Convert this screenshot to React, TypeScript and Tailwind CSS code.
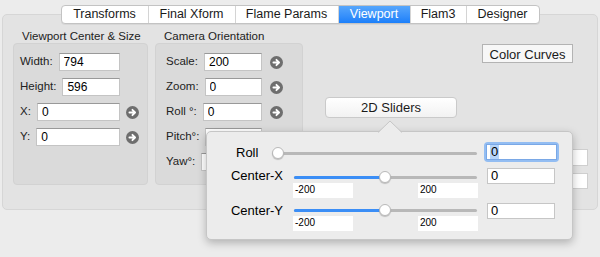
const tabs = ['Transforms', 'Final Xform', 'Flame Params', 'Viewport', 'Flam3', 'Designer']
const tabWidths = ['w-[86px]', 'w-[87px]', 'w-[103px]', 'w-[72px]', 'w-[56px]', 'w-[73px]']

function GoArrow() {
  return (
    <svg width="13" height="13" viewBox="0 0 13 13" className="shrink-0">
      <circle cx="6.5" cy="6.5" r="6.5" fill="#6e6e6e" />
      <path
        d="M3.4 6.5h5.6M6.4 3.8 9.1 6.5 6.4 9.2"
        stroke="#fff"
        strokeWidth="1.8"
        fill="none"
        strokeLinecap="round"
        strokeLinejoin="round"
      />
    </svg>
  )
}

function Field({ label, value, arrow, gap }: { label: string; value: string; arrow?: boolean; gap: string }) {
  return (
    <div className="flex h-[18px] items-center">
      <span className="shrink-0 text-[11.5px] text-[#222]">{label}</span>
      <input
        readOnly
        value={value}
        className="ml-[6px] h-[18px] min-w-0 flex-1 border border-[#c4c4c4] border-t-[#999] bg-white pl-[4px] text-[12px] text-black outline-none"
      />
      <div className={`${gap} flex w-[13px] shrink-0 justify-center`}>{arrow && <GoArrow />}</div>
    </div>
  )
}

function Group({ title, className, children }: { title: string; className: string; children: React.ReactNode }) {
  return (
    <div className={`flex shrink-0 flex-col ${className}`}>
      <div className="h-[14px] pl-[9px] text-[11.5px] leading-[14px] text-[#222]">{title}</div>
      <div className="h-[142px] rounded-[4px] border border-[#d2d2d2] bg-[#dadada]">{children}</div>
    </div>
  )
}

function Slider({ width, knob, fill }: { width: string; knob: number; fill?: boolean }) {
  return (
    <div className={`relative h-[12px] ${width}`}>
      <div className="absolute left-0 right-0 top-[5px] h-[3px] rounded-full bg-[#b8b8b8]" />
      {fill && <div className="absolute left-0 top-[5px] h-[3px] rounded-full bg-[#3b8ef6]" style={{ width: knob }} />}
      <div
        className="absolute top-0 h-[12px] w-[12px] rounded-full border border-[#b9b9b9] bg-white shadow-[0_1px_1px_rgba(0,0,0,0.2)]"
        style={{ left: knob - 6 }}
      />
    </div>
  )
}

function RangeBoxes() {
  return (
    <div className="flex justify-between">
      <div className="h-[15px] w-[60px] bg-white pl-[2px] pt-[1px] text-[10px] leading-[12px] text-black">-200</div>
      <div className="h-[15px] w-[60px] bg-white pl-[2px] pt-[1px] text-[10px] leading-[12px] text-black">200</div>
    </div>
  )
}

export default function App() {
  return (
    <div className="relative h-[257px] w-[600px] overflow-hidden bg-[#ececec] font-['Liberation_Sans',Arial,sans-serif] text-[#1e1e1e]">
      <div className="relative z-10 flex justify-center pt-[5px]">
        <div className="flex h-[19px] overflow-hidden rounded-[4px] border border-[#c3c3c3] bg-white shadow-[0_1px_0_rgba(0,0,0,0.05)]">
          {tabs.map((t, i) => (
            <div
              key={t}
              className={`${tabWidths[i]} flex items-center justify-center text-[12.5px] ${i > 0 ? 'border-l border-[#d4d4d4]' : ''} ${
                t === 'Viewport' ? 'bg-linear-to-b from-[#56a6fc] to-[#1a7ffa] text-white' : 'text-[#1a1a1a]'
              }`}
            >
              {t}
            </div>
          ))}
        </div>
      </div>

      <div className="mx-[2px] -mt-[10px] flex h-[196px] rounded-[5px] border border-[#d6d6d6] bg-[#e3e3e3] pl-[10px] pt-[14px]">
        <Group title="Viewport Center & Size" className="w-[135px]">
          <div className="flex flex-col gap-[7px] pl-[6px] pr-[8px] pt-[9px]">
            <Field label="Width:" value="794" gap="ml-[6px]" />
            <Field label="Height:" value="596" gap="ml-[6px]" />
            <Field label="X:" value="0" arrow gap="ml-[6px]" />
            <Field label="Y:" value="0" arrow gap="ml-[6px]" />
          </div>
        </Group>

        <Group title="Camera Orientation" className="ml-[7px] w-[148px]">
          <div className="flex flex-col gap-[7px] pl-[10px] pr-[19px] pt-[9px]">
            <Field label="Scale:" value="200" arrow gap="ml-[8px]" />
            <Field label="Zoom:" value="0" arrow gap="ml-[8px]" />
            <Field label="Roll °:" value="0" arrow gap="ml-[8px]" />
            <Field label="Pitch°:" value="0" arrow gap="ml-[8px]" />
            <Field label="Yaw°:" value="0" arrow gap="ml-[8px]" />
          </div>
        </Group>

        <div className="flex flex-1 flex-col">
          <button className="mr-[24px] mt-[15px] h-[19px] w-[91px] self-end border border-[#b3b3b3] bg-[#f7f7f7] text-[13px] text-[#1a1a1a]">
            Color Curves
          </button>
          <button className="ml-[22px] mt-[34px] h-[21px] w-[132px] rounded-[4px] border border-[#cacaca] bg-linear-to-b from-white to-[#f2f2f2] text-[13px] text-[#1a1a1a]">
            2D Sliders
          </button>
          <div className="mr-[9px] mt-[31px] h-[17px] w-[70px] self-end border border-[#cfcfcf] bg-white" />
          <div className="mr-[9px] mt-[7px] h-[16px] w-[70px] self-end border border-[#cfcfcf] bg-white" />
        </div>
      </div>

      <div className="absolute left-[206px] top-[131px] z-20 h-[109px] w-[367px] rounded-[5px] border border-[#c6c6c6] bg-[#ececec] shadow-[0_3px_9px_rgba(0,0,0,0.25)]">
        <svg width="24" height="13" viewBox="0 0 24 13" className="absolute left-[171px] top-[-12px]">
          <path d="M0 13 L12 1 L24 13 Z" fill="#ececec" />
          <path d="M0 12.5 L12 1 L24 12.5" fill="none" stroke="#c6c6c6" strokeWidth="1" />
        </svg>

        <div className="flex flex-col">
          <div className="mt-[10px] flex h-[20px] items-start">
            <div className="w-[65px] shrink-0 pl-[29px] text-[13px] leading-[22px] text-black">Roll</div>
            <div className="mt-[5px]">
              <Slider width="w-[205px]" knob={6} />
            </div>
            <div className="ml-[7px] h-[20px] w-[75px] rounded-[4px] bg-[#93bdf2] p-[2px]">
              <div className="flex h-[16px] items-center border border-[#7aa8e6] bg-white pl-[3px]">
                <span className="bg-[#b5d5fb] px-[1px] text-[13px] leading-[14px] text-black">0</span>
              </div>
            </div>
          </div>

          <div className="mt-[6px] flex items-start">
            <div className="w-[86px] shrink-0 pr-[10px] text-right text-[13px] leading-[16px] text-black">Center-X</div>
            <div className="flex w-[185px] flex-col">
              <div className="mx-[1px] mt-[3px]">
                <Slider width="w-[183px]" knob={91} fill />
              </div>
              <RangeBoxes />
            </div>
            <input
              readOnly
              value="0"
              className="ml-[9px] h-[16px] w-[68px] border border-[#c6c6c6] bg-white pl-[3px] text-[13px] text-black outline-none"
            />
          </div>

          <div className="mt-[5px] flex items-start">
            <div className="w-[86px] shrink-0 pr-[10px] text-right text-[13px] leading-[16px] text-black">Center-Y</div>
            <div className="flex w-[185px] flex-col">
              <div className="mx-[1px] mt-[1px]">
                <Slider width="w-[183px]" knob={91} fill />
              </div>
              <RangeBoxes />
            </div>
            <input
              readOnly
              value="0"
              className="ml-[9px] h-[16px] w-[68px] border border-[#c6c6c6] bg-white pl-[3px] text-[13px] text-black outline-none"
            />
          </div>
        </div>
      </div>
    </div>
  )
}
